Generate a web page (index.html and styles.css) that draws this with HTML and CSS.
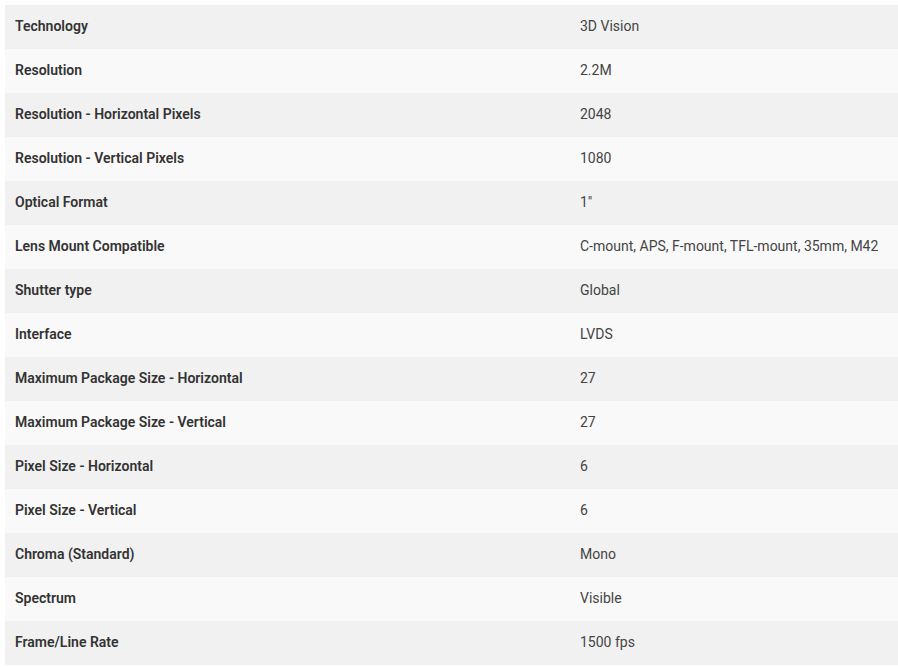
FILE: index.html
```html
<!DOCTYPE html>
<html>
<head>
<meta charset="utf-8">
<link rel="stylesheet" href="styles.css">
</head>
<body>
<table class="specs">
<tbody>
<tr><th>Technology</th><td>3D Vision</td></tr>
<tr><th>Resolution</th><td>2.2M</td></tr>
<tr><th>Resolution - Horizontal Pixels</th><td>2048</td></tr>
<tr><th>Resolution - Vertical Pixels</th><td>1080</td></tr>
<tr><th>Optical Format</th><td>1"</td></tr>
<tr><th>Lens Mount Compatible</th><td>C-mount, APS, F-mount, TFL-mount, 35mm, M42</td></tr>
<tr><th>Shutter type</th><td>Global</td></tr>
<tr><th>Interface</th><td>LVDS</td></tr>
<tr><th>Maximum Package Size - Horizontal</th><td>27</td></tr>
<tr><th>Maximum Package Size - Vertical</th><td>27</td></tr>
<tr><th>Pixel Size - Horizontal</th><td>6</td></tr>
<tr><th>Pixel Size - Vertical</th><td>6</td></tr>
<tr><th>Chroma (Standard)</th><td>Mono</td></tr>
<tr><th>Spectrum</th><td>Visible</td></tr>
<tr><th>Frame/Line Rate</th><td>1500 fps</td></tr>
</tbody>
</table>
</body>
</html>
```

FILE: styles.css
```css
html, body {
  margin: 0;
  padding: 0;
  background: #ffffff;
}
body {
  padding: 5px 0 0 5px;
  font-family: Roboto, "Liberation Sans", Arial, sans-serif;
  font-size: 14px;
  color: #333333;
}
.specs {
  width: 893px;
  border-collapse: collapse;
  table-layout: fixed;
}
.specs tr {
  height: 44px;
}
.specs tr:nth-child(odd) {
  background: #f1f1f1;
}
.specs tr:nth-child(even) {
  background: #f9f9f9;
}
.specs th, .specs td {
  padding: 0 10px 2px 10px;
  text-align: left;
  vertical-align: middle;
  line-height: 20px;
}
.specs th {
  width: 545px;
  font-weight: 600;
}
.specs td {
  font-weight: 400;
  color: #444444;
}
```
